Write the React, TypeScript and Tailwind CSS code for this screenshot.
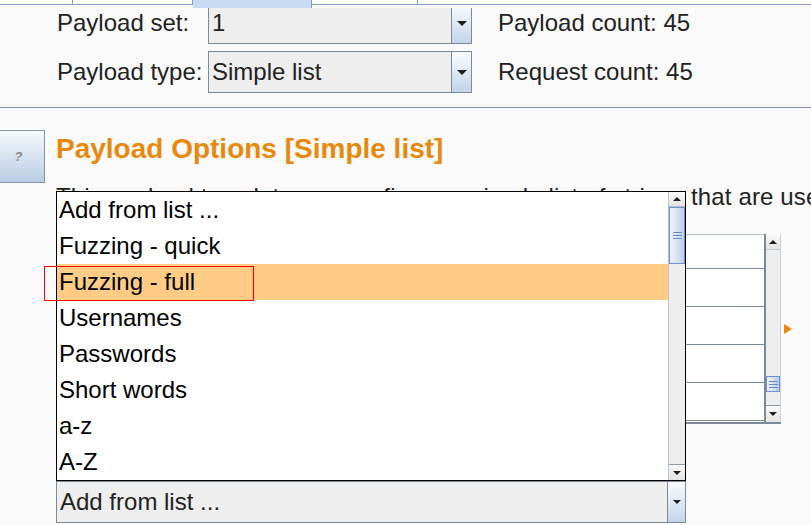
import React from "react";

const Down = ({ big = false }: { big?: boolean }) => (
  <div
    className={
      big
        ? "h-0 w-0 border-x-[5px] border-t-[5px] border-x-transparent border-t-[#1e1e1e]"
        : "h-0 w-0 border-x-[4px] border-t-[4px] border-x-transparent border-t-[#1e1e1e]"
    }
  />
);
const Up = () => (
  <div className="h-0 w-0 border-x-[4px] border-b-[4px] border-x-transparent border-b-[#1e1e1e]" />
);

const Grip = () => (
  <div className="flex flex-col gap-[2px]">
    <div className="h-px w-[9px] bg-[#6a88c8]" />
    <div className="h-px w-[9px] bg-[#6a88c8]" />
    <div className="h-px w-[9px] bg-[#6a88c8]" />
  </div>
);

function Combo({ text, width, btn = 20 }: { text: string; width: string; btn?: number }) {
  return (
    <div className={`flex h-[42px] ${width} border border-[#7b8a99] bg-[#eeeeee]`}>
      <div className="flex flex-1 items-center pl-[3px] text-[24px] text-[#222]">{text}</div>
      <div
        className={`flex ${btn === 20 ? "w-[20px]" : "w-[18px]"} items-center justify-center border-l border-[#7b8a99] bg-gradient-to-b from-[#fbfcfe] to-[#c2d5eb]`}
      >
        <Down big={btn === 20} />
      </div>
    </div>
  );
}

const items = [
  "Add from list ...",
  "Fuzzing - quick",
  "Fuzzing - full",
  "Usernames",
  "Passwords",
  "Short words",
  "a-z",
  "A-Z",
];

export default function App() {
  return (
    <div className="relative h-[525px] w-[811px] overflow-hidden bg-[#fafafa] font-['Liberation_Sans',Arial,sans-serif] text-[#222]">
      {/* tab strip */}
      <div className="flex h-[8px] items-start">
        <div className="h-[5px] w-[73px] border-b border-r border-[#7f9cc4] bg-white" />
        <div className="h-[5px] w-[120px] border-b border-r border-[#7f9cc4] bg-white" />
        <div className="h-[8px] w-[119px] border-r border-[#7f9cc4] bg-[#c6dbf1]" />
        <div className="h-[5px] w-[106px] border-b border-r border-[#7f9cc4] bg-white" />
        <div className="h-[5px] flex-1 border-b border-[#7f9cc4] bg-white" />
      </div>

      {/* payload set / type */}
      <div className="h-[99px] overflow-hidden">
        <div className="mt-[-6px] flex flex-col gap-[7px] pl-[57px]">
          <div className="flex items-center">
            <div className="w-[151px] text-[24px]">Payload set:</div>
            <Combo text="1" width="w-[264px]" />
            <div className="ml-[26px] text-[24px]">Payload count: 45</div>
          </div>
          <div className="flex items-center">
            <div className="w-[151px] text-[24px]">Payload type:</div>
            <Combo text="Simple list" width="w-[264px]" />
            <div className="ml-[26px] text-[24px]">Request count: 45</div>
          </div>
        </div>
      </div>
      <div className="h-px bg-[#7f97b8]" />

      {/* payload options section */}
      <div className="mt-[22px] flex">
        <div className="ml-[-8px] flex h-[53px] w-[53px] shrink-0 items-center justify-center border border-[#8394a8] bg-gradient-to-b from-[#f7f9fc] to-[#b8cde4]">
          <span className="text-[13px] font-bold italic text-[#8a8a8a]">?</span>
        </div>
        <div className="ml-[11px] flex min-w-0 flex-1 flex-col">
          <div className="mt-[3px] h-[32px] whitespace-nowrap text-[28px] font-bold leading-[32px] text-[#e8890c]">
            Payload Options [Simple list]
          </div>
          <div className="mt-[18px] h-[28px] whitespace-nowrap text-[24px] leading-[28px] tracking-[0.15px]">
            This payload type lets you configure a simple list of strings that are used as payloads.
          </div>
          {/* list row */}
          <div className="mt-[23px] flex items-center pr-[19px]">
            <div className="w-[110px] shrink-0" />
            <div className="flex h-[190px] flex-1 border-b-2 border-[#7b8a99]">
              <div className="flex flex-1 flex-col overflow-hidden border-t border-[#b4c0cd] bg-white">
                <div className="h-[34px] shrink-0 border-b border-[#7b8a99]" />
                <div className="h-[38px] shrink-0 border-b border-[#7b8a99]" />
                <div className="h-[38px] shrink-0 border-b border-[#7b8a99]" />
                <div className="h-[38px] shrink-0 border-b border-[#7b8a99]" />
                <div className="h-[38px] shrink-0 border-b border-[#7b8a99]" />
                <div className="h-[38px] shrink-0" />
              </div>
              <div className="flex w-[17px] flex-col border-l-2 border-r border-l-[#7b8a99] border-r-[#c9d1da] bg-[#eeeeee]">
                <div className="flex h-[16px] items-center justify-center border-b border-[#c4ccd6] bg-gradient-to-b from-[#fafafa] to-[#e4e4e4]">
                  <Up />
                </div>
                <div className="flex-1" />
                <div className="flex h-[16px] items-center justify-center border border-[#6f8fd0] bg-gradient-to-r from-[#eef3fb] via-[#d6e2f3] to-[#b9cde9]">
                  <Grip />
                </div>
                <div className="h-[14px] border-b border-[#8e9aa6]" />
                <div className="flex h-[16px] items-center justify-center bg-gradient-to-b from-[#fafafa] to-[#e4e4e4]">
                  <Down />
                </div>
              </div>
            </div>
            <div className="ml-[3px] h-0 w-0 border-y-[5px] border-l-[8px] border-y-transparent border-l-[#e8890c]" />
          </div>
          <div className="mt-[57px]">
            <Combo text="Add from list ..." width="w-[630px]" btn={18} />
          </div>
        </div>
      </div>

      {/* popup list */}
      <div className="absolute left-[56px] top-[191px] flex h-[290px] w-[630px] border border-black bg-white">
        <div className="flex flex-1 flex-col">
          {items.map((it, i) => (
            <div
              key={it}
              className={`flex h-[36px] items-center pl-[2px] text-[24px] text-black ${i === 2 ? "bg-[#ffcc86]" : ""}`}
            >
              {it}
            </div>
          ))}
        </div>
        <div className="flex w-[17px] flex-col border-l border-[#b8c4d2] bg-[#eeeeee]">
          <div className="flex h-[15px] items-center justify-center border-b border-[#b5bdc6] bg-gradient-to-b from-[#fafafa] to-[#e2e2e2]">
            <Up />
          </div>
          <div className="flex h-[57px] items-center justify-center border border-[#6f8fd0] bg-gradient-to-r from-[#eef3fb] via-[#d6e2f3] to-[#b9cde9]">
            <Grip />
          </div>
          <div className="flex-1" />
          <div className="flex h-[16px] items-center justify-center border-t border-[#8e9aa6] bg-gradient-to-b from-[#fafafa] to-[#e2e2e2]">
            <Down />
          </div>
        </div>
      </div>

      {/* red annotation box */}
      <div className="absolute left-[44px] top-[266px] h-[35px] w-[210px] border border-[#ff0000]" />
    </div>
  );
}
